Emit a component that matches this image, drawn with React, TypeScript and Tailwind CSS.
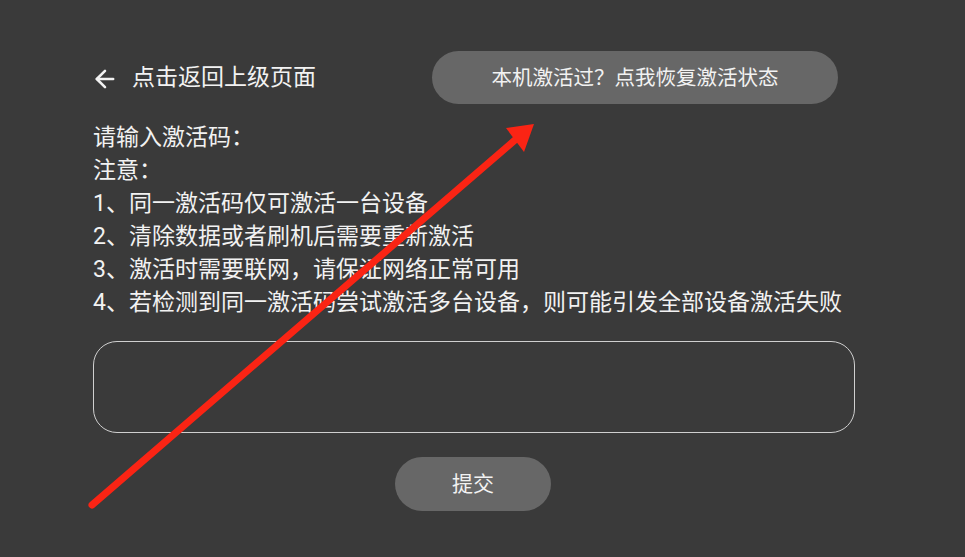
import { ArrowLeft } from 'lucide-react';

const NOTES = [
  '请输入激活码：',
  '注意：',
  '1、同一激活码仅可激活一台设备',
  '2、清除数据或者刷机后需要重新激活',
  '3、激活时需要联网，请保证网络正常可用',
  '4、若检测到同一激活码尝试激活多台设备，则可能引发全部设备激活失败',
];

const FONT = "font-['Roboto','Noto_Sans_CJK_SC',sans-serif]";

export default function App() {
  return (
    <div className={`relative h-[557px] w-[965px] overflow-hidden bg-[#3a3a3a] text-[#f2f2f2] ${FONT}`}>
      <div className="flex flex-col pl-[93px] pt-[51px]">
        <div className="flex h-[53px] items-center">
          <button className="flex items-center pt-[2px] text-[23px] text-[#f2f2f2]">
            <ArrowLeft size={28} strokeWidth={2.2} className="-ml-[2px] mr-[13px]" />
            点击返回上级页面
          </button>
          <button className="ml-[116px] h-[53px] w-[406px] rounded-full bg-[#676767] pt-[1px] text-[20.5px] text-[#f2f2f2]">
            本机激活过？点我恢复激活状态
          </button>
        </div>

        <div className="mt-[17px] flex flex-col text-[23px] leading-[33px]">
          {NOTES.map((line) => (
            <p key={line}>{line}</p>
          ))}
        </div>

        <div className="mt-[22px] h-[92px] w-[762px] rounded-[24px] border-[1.5px] border-[#cfcfcf]" />

        <div className="mt-[24px] flex w-[761px] justify-center">
          <button className="-ml-[1px] h-[54px] w-[156px] rounded-full bg-[#676767] pt-[2px] text-[21px] text-[#f2f2f2]">
            提交
          </button>
        </div>
      </div>

      {/* red annotation arrow */}
      <svg className="pointer-events-none absolute left-0 top-0" width="965" height="557" viewBox="0 0 965 557">
        <line x1="92" y1="505" x2="515" y2="140" stroke="#fa2414" strokeWidth="7" strokeLinecap="round" />
        <polygon points="534,124 506,128 524,152" fill="#fa2414" />
      </svg>
    </div>
  );
}
